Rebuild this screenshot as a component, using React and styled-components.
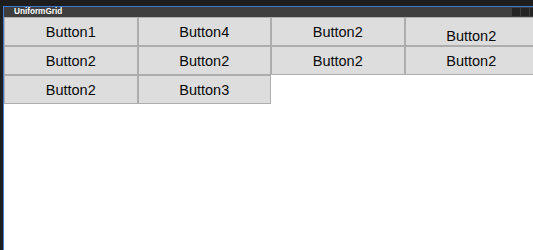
import styled, { createGlobalStyle } from "styled-components";

const GlobalStyle = createGlobalStyle`
  html, body {
    margin: 0;
    padding: 0;
    background: #ffffff;
    overflow: hidden;
  }
`;

const buttons = [
  { label: "Button1" },
  { label: "Button4" },
  { label: "Button2" },
  { label: "Button2", shift: 4 },
  { label: "Button2" },
  { label: "Button2" },
  { label: "Button2" },
  { label: "Button2" },
  { label: "Button2" },
  { label: "Button3" },
];

const App = () => {
  return (
    <Window>
      <GlobalStyle />
      <Inner>
        {/* TITLE BAR */}
        <TitleBar>
          <Title>UniformGrid</Title>
          <Controls>
            <Square />
            <Square />
            <Square />
          </Controls>
        </TitleBar>
        {/* GRID */}
        <Grid>
          {buttons.map((b, i) => (
            <Cell key={i} $shift={b.shift || 0}>
              {b.label}
            </Cell>
          ))}
        </Grid>
      </Inner>
    </Window>
  );
};

const Window = styled.div`
  width: 533px;
  height: 250px;
  box-sizing: border-box;
  background: #1e1e1e;
  padding: 6px 0 0 3px;
  display: flex;
  overflow: hidden;
`;

const Inner = styled.div`
  flex: 1;
  display: flex;
  flex-direction: column;
  background: #ffffff;
  border-top: 1px solid #3d7ad8;
  border-left: 1px solid #3d7ad8;
  min-width: 0;
  overflow: hidden;
`;

const TitleBar = styled.div`
  height: 10px;
  background: #3e3e3e;
  display: flex;
  align-items: center;
  justify-content: space-between;
  padding-left: 10px;
`;

const Title = styled.span`
  font-family: "Liberation Sans", Arial, sans-serif;
  font-weight: bold;
  font-size: 8.2px;
  line-height: 10px;
  color: #ffffff;
`;

const Controls = styled.div`
  display: flex;
  gap: 1px;
  align-self: stretch;
  padding-top: 1px;
  margin-right: -5px;
`;

const Square = styled.div`
  width: 8px;
  height: 8px;
  background: #232323;
`;

const Grid = styled.div`
  display: grid;
  grid-template-columns: repeat(4, 133.5px);
  grid-auto-rows: 29px;
  width: 534px;
`;

const Cell = styled.div`
  box-sizing: border-box;
  background: #dddddd;
  border: 1px solid #adadad;
  display: flex;
  align-items: center;
  justify-content: center;
  padding-top: ${({ $shift }) => $shift * 2}px;
  font-family: "Liberation Sans", Arial, sans-serif;
  font-size: 14.5px;
  color: #0a0a0a;
`;

export default App;
